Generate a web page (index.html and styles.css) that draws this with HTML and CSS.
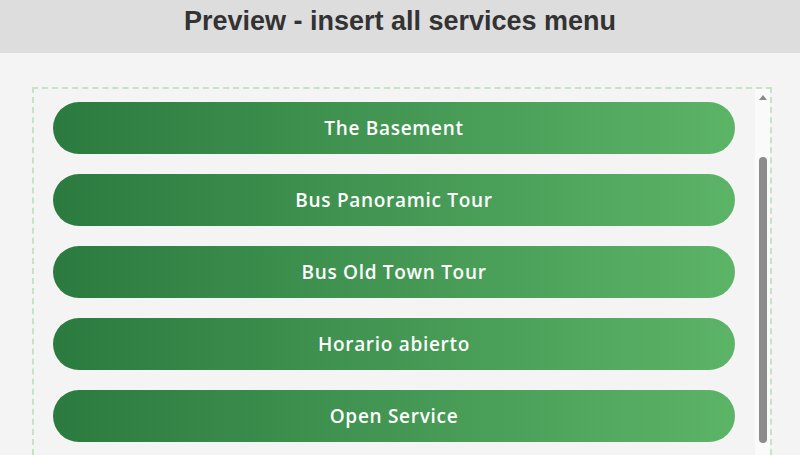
FILE: index.html
```html
<!DOCTYPE html>
<html lang="en">
<head>
<meta charset="utf-8">
<title>Preview - insert all services menu</title>
<link rel="stylesheet" href="styles.css">
</head>
<body>
  <header class="topbar">
    <h1 class="title">Preview - insert all services menu</h1>
  </header>
  <main class="stage">
    <div class="frame">
      <div class="menu">
        <a class="svc" href="#">The Basement</a>
        <a class="svc" href="#">Bus Panoramic Tour</a>
        <a class="svc" href="#">Bus Old Town Tour</a>
        <a class="svc" href="#">Horario abierto</a>
        <a class="svc" href="#">Open Service</a>
      </div>
      <div class="scrollbar">
        <span class="arrow"></span>
        <span class="thumb"></span>
      </div>
    </div>
  </main>
</body>
</html>
```

FILE: styles.css
```css
html, body {
  margin: 0;
  padding: 0;
  height: 455px;
  overflow: hidden;
}
body {
  background: #f4f4f4;
  font-family: "Liberation Sans", Arial, sans-serif;
}
.topbar {
  height: 53px;
  background: #dddddd;
  display: flex;
  justify-content: center;
}
.title {
  margin: 0;
  padding-top: 5px;
  font-size: 27px;
  line-height: 32px;
  font-weight: 700;
  color: #333333;
}
.stage {
  padding: 34px 28px 0 32px;
}
.frame {
  box-sizing: border-box;
  width: 740px;
  height: 368px;
  border: 2px dashed #c4e4c6;
  border-bottom: 0;
  display: flex;
  overflow: hidden;
}
.menu {
  flex: 1;
  padding: 13px 20px 0 19px;
  display: flex;
  flex-direction: column;
  gap: 20px;
}
.svc {
  flex: none;
  display: flex;
  align-items: center;
  justify-content: center;
  height: 52px;
  border-radius: 26px;
  background: linear-gradient(90deg, #2b7a3f 0%, #5cb467 100%);
  color: #ffffff;
  text-decoration: none;
  font-family: "Open Sans", "Noto Sans", sans-serif;
  font-weight: 600;
  font-size: 19px;
  letter-spacing: 0.7px;
}
.scrollbar {
  width: 15px;
  background: #fafafa;
  display: flex;
  flex-direction: column;
  align-items: center;
}
.arrow {
  margin-top: 6px;
  width: 0;
  height: 0;
  border-left: 4px solid transparent;
  border-right: 4px solid transparent;
  border-bottom: 5px solid #8a8a8a;
}
.thumb {
  flex: none;
  margin-top: 57px;
  width: 8px;
  height: 286px;
  border-radius: 4px;
  background: #8c8c8c;
}
```
